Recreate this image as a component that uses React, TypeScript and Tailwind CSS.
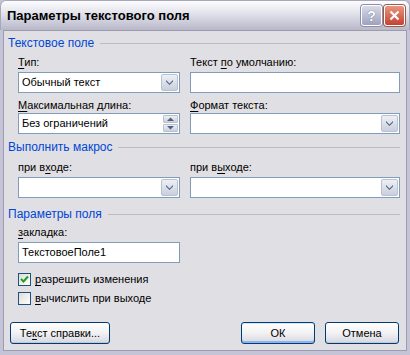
import React from "react";

const U = ({ children }: { children: React.ReactNode }) => (
  <span className="underline underline-offset-[2px] decoration-1">{children}</span>
);

const Chevron = () => (
  <svg width="7" height="5" viewBox="0 0 7 5" className="block">
    <path d="M0 0 L3.5 3.5 L7 0 L7 1.5 L3.5 5 L0 1.5 Z" fill="#4d6185" />
  </svg>
);

const Combo = ({ value, width }: { value?: string; width: string }) => (
  <div className={`${width} h-[21px] bg-white border border-[#7f9db9] flex items-center`}>
    <div className="flex-1 pl-[3px] text-[11px] leading-[13px] text-black truncate">{value}</div>
    <div className="w-[17px] h-[17px] mr-[1px] rounded-[2px] border border-[#b9c1d0] bg-gradient-to-b from-[#eef0f5] to-[#c9cfdc] flex items-center justify-center">
      <Chevron />
    </div>
  </div>
);

const SpinArrow = ({ up }: { up?: boolean }) => (
  <svg width="7" height="4" viewBox="0 0 7 4" className="block">
    <path d={up ? "M0 4 L3.5 0.5 L7 4 Z" : "M0 0 L3.5 3.5 L7 0 Z"} fill="#4d6185" />
  </svg>
);

const Header = ({ children }: { children: React.ReactNode }) => (
  <div className="flex items-center h-[13px] pr-[3px]">
    <span className="text-[12px] leading-[13px] text-[#0046d5]">{children}</span>
    <div className="flex-1 ml-[6px] h-px bg-[#bcbcc4]" />
  </div>
);

const Label = ({ children }: { children: React.ReactNode }) => (
  <div className="text-[11px] leading-[13px] text-black">{children}</div>
);

const Check = ({ checked, children }: { checked?: boolean; children: React.ReactNode }) => (
  <div className="flex items-center h-[13px]">
    <div className="w-[13px] h-[13px] border border-[#1c5180] bg-gradient-to-br from-[#dcdcd6] to-[#ffffff] flex items-center justify-center">
      {checked && (
        <svg width="9" height="9" viewBox="0 0 9 9">
          <path d="M1 4 L3.5 6.5 L8 1.5" stroke="#21a121" strokeWidth="2" fill="none" />
        </svg>
      )}
    </div>
    <span className="ml-[4px] text-[11px] leading-[13px] text-black">{children}</span>
  </div>
);

const Button = ({ children, width, def }: { children: React.ReactNode; width: string; def?: boolean }) => (
  <div
    className={`${width} h-[22px] rounded-[3px] border border-[#003c74] bg-gradient-to-b from-[#ffffff] via-[#f2f2f4] to-[#d6d6e0] flex items-center justify-center text-[11px] leading-[13px] text-black ${
      def ? "shadow-[inset_0_-2px_0_#8fb1ee,inset_0_1px_0_#cee7ff]" : "shadow-[inset_0_-1px_0_#c6c6d2]"
    }`}
  >
    {children}
  </div>
);

export default function App() {
  return (
    <div
      className="w-[410px] h-[355px] flex flex-col bg-[#c4c4d6]"
      style={{ fontFamily: '"Liberation Sans", Arial, sans-serif' }}
    >
      {/* Title bar */}
      <div className="h-[30px] flex items-center pl-[6px] pr-[4px] rounded-t-[6px] border-t border-x border-[#a8a8bc] bg-gradient-to-b from-[#fdfdfe] via-[#dddde7] to-[#b8b8c9]">
        <span className="flex-1 text-[13px] font-bold text-black">Параметры текстового поля</span>
        <div className="w-[21px] h-[21px] rounded-[3px] border border-white bg-gradient-to-b from-[#d9dbe8] to-[#9da1be] flex items-center justify-center text-white font-bold text-[14px] leading-none shadow-[0_0_0_1px_#8c8fa8]">
          <span className="text-white" style={{ textShadow: "0 0 1px #4a4e6a" }}>?</span>
        </div>
        <div className="ml-[2px] w-[21px] h-[21px] rounded-[3px] border border-white bg-gradient-to-b from-[#e8947f] to-[#c4402e] flex items-center justify-center shadow-[0_0_0_1px_#a0584a]">
          <svg width="11" height="11" viewBox="0 0 11 11">
            <path d="M1.5 1.5 L9.5 9.5 M9.5 1.5 L1.5 9.5" stroke="white" strokeWidth="2.2" />
          </svg>
        </div>
      </div>

      {/* Body */}
      <div className="flex-1 mx-[3px] mb-[4px] bg-[#e0dfe3] border border-[#9c9cb0] flex flex-col pl-[4px] pr-[3px]">
        <div className="mt-[6px]">
          <Header>Текстовое поле</Header>
        </div>
        <div className="pl-[10px] grid grid-cols-[162px_210px] gap-x-[10px]">
          <div className="mt-[6px]">
            <Label>
              <U>Т</U>ип:
            </Label>
            <div className="mt-[3px]">
              <Combo value="Обычный текст" width="w-[162px]" />
            </div>
          </div>
          <div className="mt-[6px]">
            <Label>
              Текст <U>п</U>о умолчанию:
            </Label>
            <div className="mt-[3px] w-[210px] h-[21px] bg-white border border-[#7f9db9]" />
          </div>
          <div className="mt-[6px]">
            <Label>
              <U>М</U>аксимальная длина:
            </Label>
            <div className="mt-[1px] w-[162px] h-[21px] bg-white border border-[#7f9db9] flex items-center">
              <div className="flex-1 pl-[3px] text-[11px] leading-[13px]">Без ограничений</div>
              <div className="mr-[1px] flex flex-col gap-[1px]">
                <div className="w-[15px] h-[8px] rounded-[1px] border border-[#b9c1d0] bg-gradient-to-b from-[#eef0f5] to-[#c9cfdc] flex items-center justify-center">
                  <SpinArrow up />
                </div>
                <div className="w-[15px] h-[8px] rounded-[1px] border border-[#b9c1d0] bg-gradient-to-b from-[#eef0f5] to-[#c9cfdc] flex items-center justify-center">
                  <SpinArrow />
                </div>
              </div>
            </div>
          </div>
          <div className="mt-[6px]">
            <Label>
              <U>Ф</U>ормат текста:
            </Label>
            <div className="mt-[1px]">
              <Combo width="w-[210px]" />
            </div>
          </div>
        </div>

        <div className="mt-[7px]">
          <Header>Выполнить макрос</Header>
        </div>
        <div className="pl-[10px] grid grid-cols-[162px_210px] gap-x-[10px]">
          <div className="mt-[7px]">
            <Label>
              при в<U>х</U>оде:
            </Label>
            <div className="mt-[3px]">
              <Combo width="w-[162px]" />
            </div>
          </div>
          <div className="mt-[7px]">
            <Label>
              при в<U>ы</U>ходе:
            </Label>
            <div className="mt-[3px]">
              <Combo width="w-[210px]" />
            </div>
          </div>
        </div>

        <div className="mt-[10px]">
          <Header>Параметры поля</Header>
        </div>
        <div className="pl-[10px]">
          <div className="mt-[5px]">
            <Label>
              <U>з</U>акладка:
            </Label>
            <div className="mt-[3px] w-[162px] h-[21px] bg-white border border-[#7f9db9] flex items-center pl-[3px] text-[11px] leading-[13px]">
              ТекстовоеПоле1
            </div>
          </div>
          <div className="mt-[10px]">
            <Check checked>
              <U>р</U>азрешить изменения
            </Check>
          </div>
          <div className="mt-[6px]">
            <Check>
              <U>в</U>ычислить при выходе
            </Check>
          </div>
        </div>

        <div className="mt-[17px] pl-[2px] flex items-center">
          <Button width="w-[100px]">
            Те<U>к</U>ст справки...
          </Button>
          <div className="flex-1" />
          <Button width="w-[74px]" def>
            ОК
          </Button>
          <div className="w-[10px]" />
          <Button width="w-[74px]">Отмена</Button>
          <div className="w-[4px]" />
        </div>
      </div>
    </div>
  );
}
